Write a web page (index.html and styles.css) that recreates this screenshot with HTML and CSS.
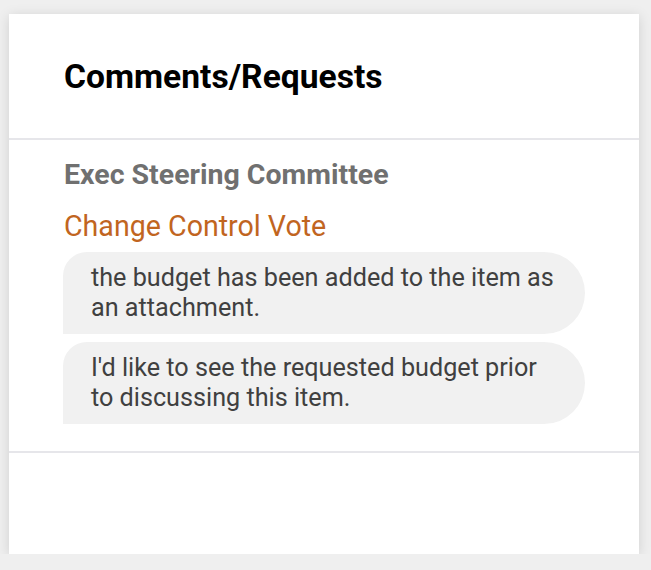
FILE: index.html
```html
<!doctype html>
<html lang="en-us">

<head>
    <meta charset="utf-8">
    <title>Comments/Requests</title>
    <link rel="stylesheet" href="styles.css">
</head>

<body>
    <div class="card">
        <div class="card_header">
            <h2 class="card_title">Comments/Requests</h2>
        </div>
        <div class="card_body">
            <div class="group_name">Exec Steering Committee</div>
            <div class="item_name">Change Control Vote</div>
            <div class="comments">
                <div class="bubble">the budget has been added to the item as an attachment.</div>
                <div class="bubble">I'd like to see the requested budget prior to discussing this item.</div>
            </div>
        </div>
        <div class="card_footer"></div>
    </div>
</body>

</html>
```

FILE: styles.css
```css
body {
    font-family: Roboto, "Liberation Sans", sans-serif;
    margin: 0;
    padding: 14px 0 0 9px;
    background: #efefef;
}

.card {
    width: 630px;
    height: 540px;
    background: #fff;
    box-shadow: 0 2px 12px rgba(0, 0, 0, 0.13);
    display: flex;
    flex-direction: column;
}

.card_header {
    height: 126px;
    padding: 0 55px;
    box-sizing: border-box;
    display: flex;
    align-items: center;
    border-bottom: 2px solid #e6e6ea;
}

.card_title {
    margin: 0;
    font-size: 33.6px;
    font-weight: 700;
    color: #000;
}

.card_body {
    padding: 18px 54px 27px 54px;
    border-bottom: 2px solid #e6e6ea;
}

.group_name {
    padding-left: 1px;
    font-size: 28.5px;
    line-height: 34px;
    font-weight: 700;
    color: #707070;
}

.item_name {
    padding-left: 1px;
    margin-top: 17px;
    font-size: 28.6px;
    line-height: 34px;
    color: #c1651f;
}

.comments {
    margin-top: 9px;
    display: flex;
    flex-direction: column;
    gap: 8px;
}

.bubble {
    background: #f1f1f1;
    color: #404040;
    font-size: 25.2px;
    line-height: 30px;
    padding: 11px 28px;
    border-radius: 24px 41px 41px 0;
}

.card_footer {
    flex: 1;
}
```
